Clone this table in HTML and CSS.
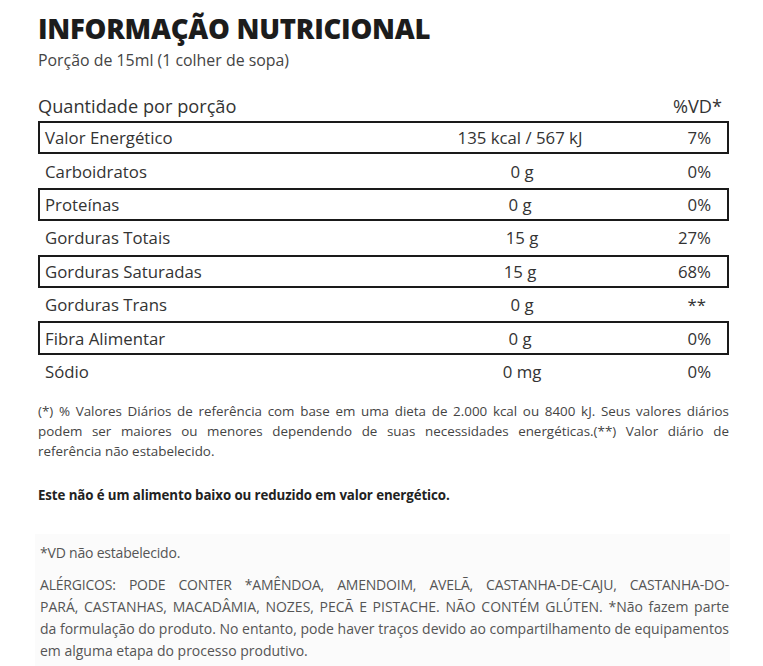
FILE: index.html
```html
<!DOCTYPE html>
<html lang="pt-BR">
<head>
<meta charset="utf-8">
<title>Informação Nutricional</title>
<link rel="stylesheet" href="styles.css">
</head>
<body>
<div class="page">
  <h1 class="title">INFORMAÇÃO NUTRICIONAL</h1>
  <p class="portion">Porção de 15ml (1 colher de sopa)</p>

  <div class="head">
    <span>Quantidade por porção</span>
    <span>%VD*</span>
  </div>

  <div class="table">
    <div class="row boxed"><span class="name">Valor Energético</span><span class="qty">135 kcal / 567 kJ</span><span class="vd">7%</span></div>
    <div class="row"><span class="name">Carboidratos</span><span class="qty">0 g</span><span class="vd">0%</span></div>
    <div class="row boxed"><span class="name">Proteínas</span><span class="qty">0 g</span><span class="vd">0%</span></div>
    <div class="row"><span class="name">Gorduras Totais</span><span class="qty">15 g</span><span class="vd">27%</span></div>
    <div class="row boxed"><span class="name">Gorduras Saturadas</span><span class="qty">15 g</span><span class="vd">68%</span></div>
    <div class="row"><span class="name">Gorduras Trans</span><span class="qty">0 g</span><span class="vd stars">**</span></div>
    <div class="row boxed"><span class="name">Fibra Alimentar</span><span class="qty">0 g</span><span class="vd">0%</span></div>
    <div class="row"><span class="name">Sódio</span><span class="qty">0 mg</span><span class="vd">0%</span></div>
  </div>

  <p class="note">(*) % Valores Diários de referência com base em uma dieta de 2.000 kcal ou 8400 kJ. Seus valores diários podem ser maiores ou menores dependendo de suas necessidades energéticas.(**) Valor diário de referência&nbsp;não estabelecido.</p>

  <p class="claim">Este não é um alimento baixo ou reduzido em valor energético.</p>

  <div class="extra">
    <p class="vd-note">*VD não estabelecido.</p>
    <div class="allergens">
      <span class="first-line">ALÉRGICOS: PODE CONTER *AMÊNDOA, AMENDOIM, AVELÃ, CASTANHA-DE-CAJU, CASTANHA-DO-</span>
      <span class="rest">PARÁ, CASTANHAS, MACADÂMIA, NOZES, PECÃ E PISTACHE. NÃO CONTÉM GLÚTEN. *Não fazem parte da&nbsp;formulação do produto. No entanto, pode haver traços devido ao compartilhamento de equipamentos em&nbsp;alguma etapa do processo produtivo.</span>
    </div>
  </div>
</div>
</body>
</html>
```

FILE: styles.css
```css
* { box-sizing: border-box; }
html, body { margin: 0; padding: 0; background: #fff; }
body { font-family: "Open Sans", "Noto Sans", sans-serif; color: #333; }

.page {
  width: 763px;
  padding: 12px 34px 0 38px;
}

.title {
  margin: 0;
  font-family: "Open Sans", sans-serif;
  font-weight: 800;
  font-size: 27.5px;
  line-height: 34px;
  color: #1c1c1c;
  letter-spacing: -0.25px;
}

.portion {
  margin: 4px 0 0;
  font-size: 15.9px;
  line-height: 20px;
  color: #444;
}

.head {
  display: flex;
  justify-content: space-between;
  margin-top: 25px;
  padding-right: 7px;
  font-size: 18.2px;
  line-height: 22px;
  color: #333;
}

.table {
  margin-top: 4px;
}

.row {
  display: grid;
  grid-template-columns: 1fr 200px 107px;
  align-items: center;
  height: 33.4px;
  font-size: 16.8px;
  color: #333;
  border: 2px solid transparent;
  border-left: 0; border-right: 0;
}

.row.boxed {
  border: 2px solid #1a1a1a;
}

.name { padding-left: 7px; }
.row.boxed .name { padding-left: 5px; }
.qty { text-align: center; }
.vd { text-align: right; padding-right: 18px; }
.row.boxed .vd { padding-right: 16px; }
.vd.stars { padding-right: 23px; }

.note {
  margin: 13px 0 0;
  font-size: 13.4px;
  line-height: 20px;
  text-align: justify;
  color: #444;
}

.claim {
  margin: 24px 0 0;
  font-size: 13.3px;
  line-height: 20px;
  font-weight: 700;
  color: #222;
  letter-spacing: -0.1px;
}

.extra {
  margin: 29px 0 0 -3px;
  width: 695px;
  background: #fbfbfb;
  padding: 9px 1px 10px 5px;
}

.vd-note {
  margin: 0;
  font-size: 14px;
  line-height: 20px;
  color: #555;
  letter-spacing: -0.2px;
}

.allergens {
  margin: 11px 0 0;
  font-size: 14px;
  line-height: 22px;
  color: #555;
}

.first-line {
  display: block;
  text-align: justify;
  text-align-last: justify;
  letter-spacing: -0.2px;
}

.rest {
  display: block;
  text-align: justify;
}
```
